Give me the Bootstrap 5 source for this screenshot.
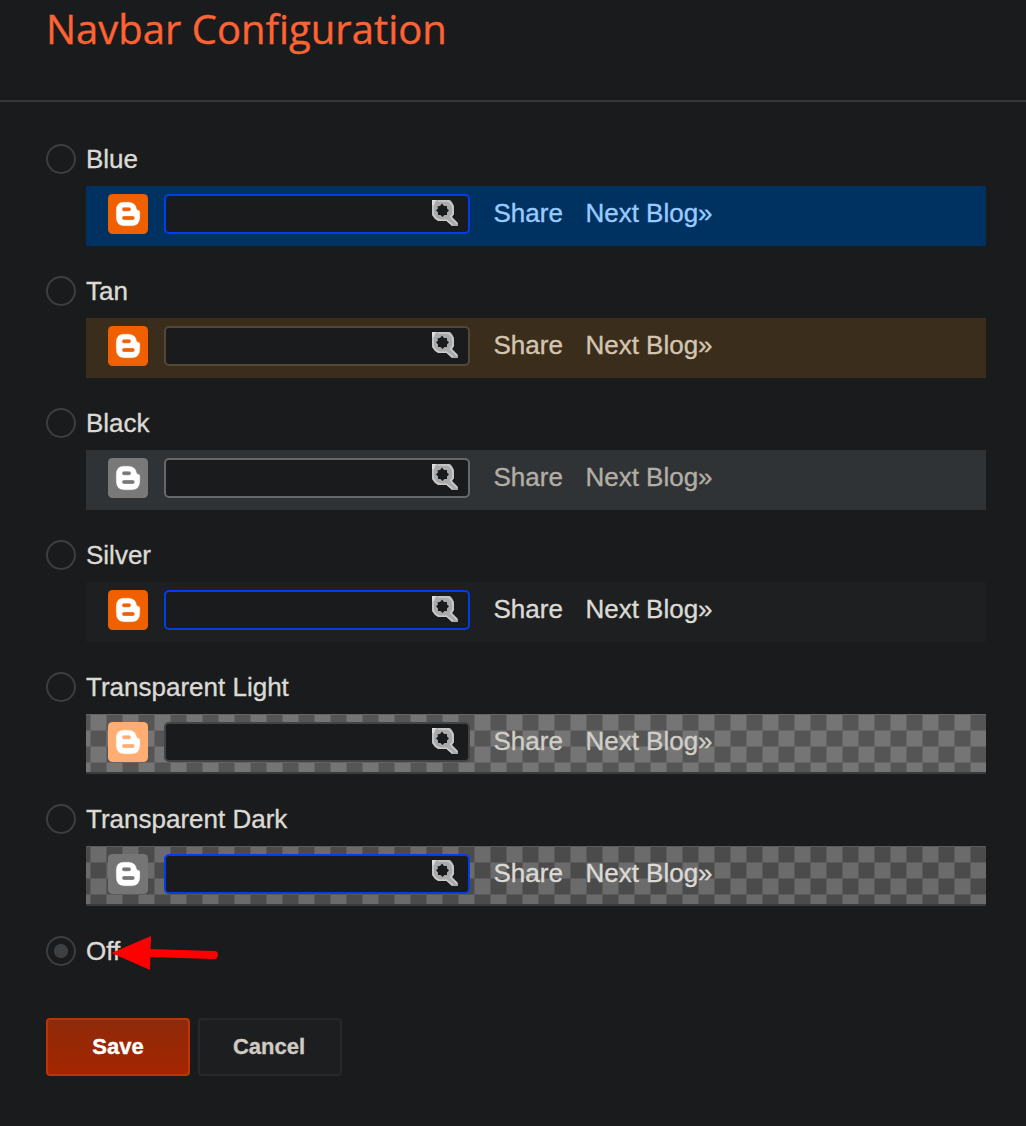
<!DOCTYPE html>
<html lang="en">
<head>
<meta charset="utf-8">
<title>Navbar Configuration</title>
<link href="https://cdn.jsdelivr.net/npm/bootstrap@5.3.0/dist/css/bootstrap.min.css" rel="stylesheet">
<style>
body{background:#1a1b1c;color:#dcdad5;font-family:"Liberation Sans",Arial,sans-serif;font-size:26px;line-height:30px;height:1126px;overflow:hidden;-webkit-text-stroke:.35px currentColor}
.page-head{height:102px;border-bottom:2px solid #363738;padding-left:46px}
.page-head h1{font-family:"Open Sans",sans-serif;font-size:40px;line-height:58px;color:#ff6334;font-weight:400;white-space:nowrap}
.options{padding:42px 40px 0 46px}
.option{height:132px}
.option.last-option{height:74px}
.option .form-check-input{width:30px;height:30px;border:2px solid #3c3f41;background:none;box-shadow:none}
.option .form-check-input:checked{background:radial-gradient(circle,#3c4043 0 6.6px,transparent 7.4px);border-color:#3c3f41}
.option label{margin-left:10px}
.preview{height:60px;margin:12px 0 0 40px;padding:8px 22px;color:var(--fg);background:var(--bar)}
.logo{width:40px;height:40px;margin-right:16px;color:var(--logo);flex:none}
.search-field{width:306px;height:40px;border:2px solid var(--edge);border-radius:5px;background:#1a1b1c;padding:4px 10px 0 0;flex:none}
.search-field svg{width:26px;height:26px;display:block}
.links{margin:4px 0 0 23.5px;gap:22.500px;white-space:nowrap}
.blue{--bar:#003261;--fg:#98cbff;--logo:#f06000;--edge:#003ded}
.tan{--bar:#3b2d1b;--fg:#d3c5b0;--logo:#f06000;--edge:#53473a}
.black{--bar:#2f3335;--fg:#b3aea5;--logo:#797979;--edge:#67686a}
.silver{--bar:#1e1f20;--fg:#dcdad5;--logo:#f06000;--edge:#003ded}
.light-clear{--d:#555;--l:#757575;--line:#656565;--fg:#d0cec7;--logo:#ffad72;--edge:#424344}
.dark-clear{--d:#4b4b4b;--l:#6b6b6b;--line:#5b5b5b;--fg:#dcdad5;--logo:#757575;--edge:#003ded}
.checker{border-bottom:2px solid #3a3b3b;background:
 linear-gradient(var(--line) 1px,transparent 1px) 0 0/16px 16px,
 linear-gradient(90deg,var(--line) 1px,transparent 1px) 4px 0/16px 16px,
 conic-gradient(var(--d) 25%,var(--l) 0 50%,var(--d) 0 75%,var(--l) 0) 4px 0/32px 32px;background-origin:padding-box}
.actions{padding-left:46px;gap:8px}
.actions .btn{width:144px;height:58px;border-width:2px;border-radius:4px;font-size:22px;font-weight:700;padding:0 0 2px}
.save-btn,.save-btn:hover{color:#fff;border-color:#c03207;background:linear-gradient(#8f2a09,#a42500)}
.actions .cancel-btn{padding-right:2px}
.cancel-btn,.cancel-btn:hover{color:#cfcac3;border-color:#262829;background:#1d1e1f}
.pointer-mark{left:110px;top:934px;width:112px;height:38px;pointer-events:none}
</style>
<script src="https://cdn.jsdelivr.net/npm/bootstrap@5.3.0/dist/js/bootstrap.bundle.min.js"></script>
</head>
<body class="position-relative">
<svg class="d-none">
 <symbol id="blogger" viewBox="0 0 40 40">
  <rect width="40" height="40" rx="4.500" fill="currentColor"/>
  <path fill="#fff" stroke="#fff" stroke-opacity=".35" stroke-width=".8" fill-rule="evenodd" d="M15.500 8.200H21Q27.800 8.700 28.600 15.200L29.400 16.200Q31.800 15.800 31.800 18V23.500Q31.500 31.800 23.500 31.800H16.500Q8.300 31.500 8.300 23.500V16Q8.300 8.500 15.500 8.200zM16 13.300Q14 13.300 14 15.300T16 17.300H21Q23 17.300 23 15.300T21 13.300zM16 22Q14 22 14 24T16 26H24.700Q26.700 26 26.700 24T24.700 22z"/>
 </symbol>
 <symbol id="search" viewBox="0 0 26 26">
  <path fill="#aaa" fill-rule="evenodd" d="M0 0H18L20 2L22 6V14L20 17L26 23V26H20L15 21H6L3 19L0 15zM10 3.500L8 6L5.500 6.200L6 8.500L4 10.300L6 12.500V15H8.500L10.500 17L12.500 15H15V12.500L17 10.300L15 8.500V6H12z"/>
  <path fill="none" stroke="#ccc" stroke-linejoin="round" stroke-width="1.600" d="M1 5V14.500L3.500 18L7 20.200H14.500L20.500 25.200M6 1H16.500L20 4.500L21 8V14L18.700 17L25 23.500"/>
  <path fill="#dedede" d="M0 0h5L3 2L2 5H0z"/>
 </symbol>
</svg>
<header class="page-head"><h1 class="m-0">Navbar Configuration</h1></header>
<main>
<form class="options">
 <div class="option blue"><div class="d-flex"><input class="form-check-input m-0" type="radio" name="nav" id="o1"><label for="o1">Blue</label></div>
  <div class="preview d-flex"><svg class="logo"><use href="#blogger"/></svg><div class="search-field d-flex justify-content-end"><svg><use href="#search"/></svg></div><div class="links d-flex"><span>Share</span><span>Next Blog»</span></div></div></div>
 <div class="option tan"><div class="d-flex"><input class="form-check-input m-0" type="radio" name="nav" id="o2"><label for="o2">Tan</label></div>
  <div class="preview d-flex"><svg class="logo"><use href="#blogger"/></svg><div class="search-field d-flex justify-content-end"><svg><use href="#search"/></svg></div><div class="links d-flex"><span>Share</span><span>Next Blog»</span></div></div></div>
 <div class="option black"><div class="d-flex"><input class="form-check-input m-0" type="radio" name="nav" id="o3"><label for="o3">Black</label></div>
  <div class="preview d-flex"><svg class="logo"><use href="#blogger"/></svg><div class="search-field d-flex justify-content-end"><svg><use href="#search"/></svg></div><div class="links d-flex"><span>Share</span><span>Next Blog»</span></div></div></div>
 <div class="option silver"><div class="d-flex"><input class="form-check-input m-0" type="radio" name="nav" id="o4"><label for="o4">Silver</label></div>
  <div class="preview d-flex"><svg class="logo"><use href="#blogger"/></svg><div class="search-field d-flex justify-content-end"><svg><use href="#search"/></svg></div><div class="links d-flex"><span>Share</span><span>Next Blog»</span></div></div></div>
 <div class="option light-clear"><div class="d-flex"><input class="form-check-input m-0" type="radio" name="nav" id="o5"><label for="o5">Transparent Light</label></div>
  <div class="preview checker d-flex"><svg class="logo"><use href="#blogger"/></svg><div class="search-field d-flex justify-content-end"><svg><use href="#search"/></svg></div><div class="links d-flex"><span>Share</span><span>Next Blog»</span></div></div></div>
 <div class="option dark-clear"><div class="d-flex"><input class="form-check-input m-0" type="radio" name="nav" id="o6"><label for="o6">Transparent Dark</label></div>
  <div class="preview checker d-flex"><svg class="logo"><use href="#blogger"/></svg><div class="search-field d-flex justify-content-end"><svg><use href="#search"/></svg></div><div class="links d-flex"><span>Share</span><span>Next Blog»</span></div></div></div>
 <div class="option last-option"><div class="d-flex"><input class="form-check-input m-0" type="radio" name="nav" id="o7" checked><label for="o7">Off</label></div></div>
</form>
<div class="actions d-flex pt-2"><button class="btn save-btn" type="button">Save</button><button class="btn cancel-btn" type="button">Cancel</button></div>
</main>
<svg class="pointer-mark position-absolute" viewBox="110 934 112 38"><path d="M148 953L214 955" stroke="#f00" stroke-width="8" stroke-linecap="round"/><path d="M111.500 953L151 936L150 970z" fill="#f00"/></svg>
</body>
</html>
